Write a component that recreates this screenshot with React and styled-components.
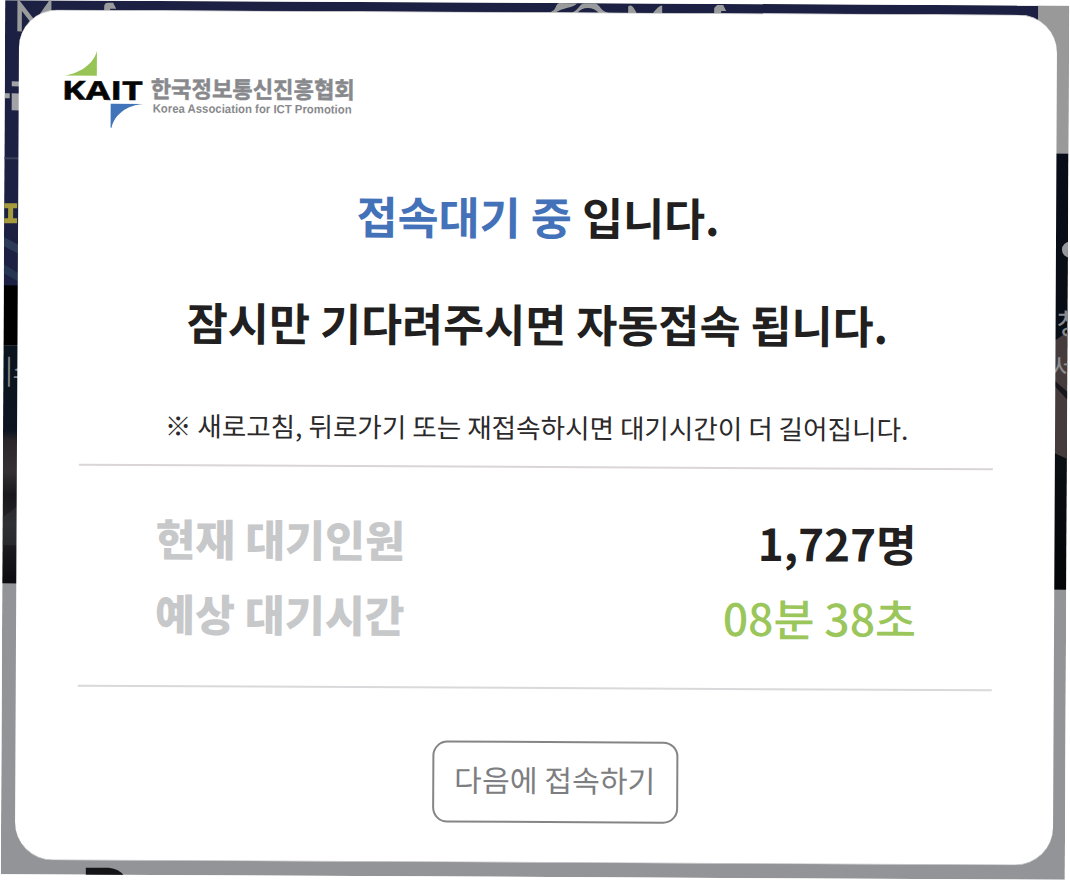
import React from "react";
import styled, { createGlobalStyle } from "styled-components";

const GlobalStyle = createGlobalStyle`
  * {
    box-sizing: border-box;
  }
  html, body {
    margin: 0;
    width: 1070px;
    height: 880px;
    overflow: hidden;
    background: #ffffff;
    font-family: "Noto Sans CJK KR", "Noto Sans", sans-serif;
  }
  p, h1, dl, dt, dd {
    margin: 0;
  }
`;

const Viewport = styled.div`
  width: 1070px;
  height: 880px;
  overflow: hidden;
`;

// the window sits very slightly tilted
const Stage = styled.div`
  display: grid;
  width: 1064px;
  height: 874px;
  overflow: hidden;
  transform-origin: 0 0;
  transform: matrix(1, 0.00505, -0.00505, 1, 5.2, 0.3);
`;

const Backdrop = styled.div`
  grid-area: 1 / 1;
  width: 1064px;
  height: 874px;
  svg {
    display: block;
  }
`;

const Card = styled.main`
  grid-area: 1 / 1;
  z-index: 1;
  display: flex;
  flex-direction: column;
  width: 1038px;
  height: 851px;
  margin: 9px 0 0 14px;
  padding: 40px 62px 0;
  border-top: 1px solid #c2c2c6;
  border-bottom: 1px solid #c2c2c6;
  border-radius: 38px;
  background: #ffffff;
`;

const Logo = styled.div`
  height: 80px;
  margin-left: -17px;
  svg {
    display: block;
  }
`;

const Title = styled.h1`
  margin-top: ${(props) => props.$top}px;
  padding-left: 2px;
  height: 60px;
  line-height: 60px;
  font-size: 44.6px;
  font-weight: 700;
  color: #211f20;
  text-align: center;
  white-space: nowrap;
`;

const Accent = styled.span`
  color: #4472b9;
`;

const Notice = styled.p`
  margin-top: 56px;
  padding-left: 1px;
  height: 36px;
  line-height: 35px;
  font-size: 26.6px;
  color: #2b292a;
  text-align: center;
  white-space: nowrap;
`;

const Status = styled.dl`
  display: flex;
  flex-direction: column;
  gap: 15px;
  height: 223px;
  margin-top: 21px;
  padding: 41px 76px 0 77px;
  border-top: 2px solid #dad6d7;
  border-bottom: 2px solid #d9d9db;
`;

const StatusRow = styled.div`
  display: flex;
  justify-content: space-between;
  height: 60px;
  line-height: 60px;
  white-space: nowrap;
`;

const Label = styled.dt`
  font-size: 43.4px;
  font-weight: 900;
  color: #c7c8ca;
`;

const Value = styled.dd`
  padding-top: 2px;
  font-size: ${(props) => (props.$light ? 44.5 : 44)}px;
  font-weight: ${(props) => (props.$light ? 500 : 700)};
  color: ${(props) => (props.$light ? "#9bc65b" : "#211f20")};
`;

const LaterButton = styled.button`
  align-self: center;
  width: 246px;
  height: 82px;
  margin: 52px 0 0 41px;
  padding: 0 0 6px;
  border: 2px solid #858587;
  border-radius: 15px;
  background: #ffffff;
  color: #7d7e81;
  font-family: inherit;
  font-size: 30.2px;
  line-height: 70px;
  white-space: nowrap;
`;

function PageBehind() {
  return (
    <Backdrop aria-hidden="true">
      <svg width="1064" height="874" viewBox="0 0 1064 874">
        <defs>
          <linearGradient id="photoLeft" x1="0" y1="0" x2="0" y2="1">
            <stop offset="0" stopColor="#09141e" />
            <stop offset="0.36" stopColor="#0d1620" />
            <stop offset="0.4" stopColor="#2a2629" />
            <stop offset="0.53" stopColor="#343034" />
            <stop offset="0.63" stopColor="#19171c" />
            <stop offset="0.75" stopColor="#242429" />
            <stop offset="1" stopColor="#0c0b0f" />
          </linearGradient>
          <linearGradient id="photoRight" x1="0" y1="0" x2="0" y2="1">
            <stop offset="0" stopColor="#070c18" />
            <stop offset="0.7" stopColor="#0a0f13" />
            <stop offset="1" stopColor="#030508" />
          </linearGradient>
        </defs>
        <rect width="1064" height="874" fill="#939497" />
        <rect width="1033" height="286" fill="#1c2143" />
        <rect y="157" width="20" height="2" fill="#3b4058" />
        <path d="M0 237 L20 247 V256 L0 246 Z" fill="#2c3c58" />
        <path d="M0 264 L20 276 V284 L0 273 Z" fill="#263551" />
        <rect y="285" width="20" height="60" fill="#000000" />
        <rect y="345" width="20" height="238" fill="url(#photoLeft)" />
        <path d="M0 517 L20 502 V545 H0 Z" fill="#4a4b50" opacity="0.3" />
        <rect x="1033" width="31" height="149" fill="#999999" />
        <rect x="1045" y="148" width="19" height="436" fill="url(#photoRight)" />
        <path d="M1050 336 L1064 326 V453 L1050 447 Z" fill="#453b3d" />
        <path d="M1050 374 L1064 386 V394 L1050 379 Z" fill="#16161b" />
        <circle cx="1066" cy="244" r="8" fill="#97989c" />
        <path d="M14.5 31 V4 L30 24 L44 4 V31" fill="none" stroke="#9a9b9d" strokeWidth="4.5" />
        <path d="M0 93 H5 V98 H0 Z M7 81 H15 V86 H7 Z M7 93 H15 V110 H7 Z" fill="#a2a3a6" />
        <path d="M0 203 H13 V208 H9 V218 H13 V223 H0 V218 H4 V208 H0 Z" fill="#a69b3c" />
        <path d="M99 10 V6 q0-4 4-4 h5 l3 6 h-6 v4 z" fill="#9a9b9d" />
        <path d="M543 10 C553 7 549 2 554 0 H572 C569 5 557 4 550 10 Z M566 10 C575 6 574 0 580 0 H590 C597 3 594 8 606 10 H594 C588 3 577 3 572 10 Z" fill="#9a9b9d" />
        <path d="M623 11 V3 q4-4 9 8 z M647 11 q6-9 10-9 V11 z M709 11 V4 l3-3 h6 l3 6 h-5 v4 z" fill="#9a9b9d" />
        <text x="2" y="379" fontSize="27" fill="#85878b">|스</text>
        <g fill="#8d8c8f" fontSize="29">
          <text x="1053" y="329">청</text>
          <text x="1047" y="372" fontSize="27">서</text>
        </g>
        <path d="M85 867 H108 Q119 868 124 876 H85 Z" fill="#151416" />
      </svg>
    </Backdrop>
  );
}

function KaitLogo() {
  return (
    <Logo>
      <svg width="300" height="80" viewBox="0 0 300 80">
        <path d="M0 25 C16 23 30 13 33 0 V25 Z" fill="#98c455" />
        <path d="M47 53 H80 C64 54 51 63 48 77 H47 Z" fill="#4274ba" />
        <text x="-2" y="49" fontFamily="Open Sans, sans-serif" fontSize="26" fontWeight="700" textLength="81" lengthAdjust="spacingAndGlyphs" fill="#050505" stroke="#050505" strokeWidth="0.5">KAIT</text>
        <text x="87" y="46.5" fontSize="23" fontWeight="700" textLength="204" lengthAdjust="spacingAndGlyphs" fill="#88898c" stroke="#88898c" strokeWidth="0.5">한국정보통신진흥협회</text>
        <text x="89" y="61.5" fontFamily="Liberation Sans, sans-serif" fontSize="12" fontWeight="700" textLength="199" lengthAdjust="spacingAndGlyphs" fill="#88898c">Korea Association for ICT Promotion</text>
      </svg>
    </Logo>
  );
}

function App() {
  return (
    <>
      <GlobalStyle />
      <Viewport>
        <Stage>
          <PageBehind />
          <Card>
            <KaitLogo />
            <Title $top={53}>
              <Accent>접속대기 중</Accent> 입니다.
            </Title>
            <Title $top={47}>잠시만 기다려주시면 자동접속 됩니다.</Title>
            <Notice>※ 새로고침, 뒤로가기 또는 재접속하시면 대기시간이 더 길어집니다.</Notice>
            <Status>
              <StatusRow>
                <Label>현재 대기인원</Label>
                <Value>1,727명</Value>
              </StatusRow>
              <StatusRow>
                <Label>예상 대기시간</Label>
                <Value $light>08분 38초</Value>
              </StatusRow>
            </Status>
            <LaterButton type="button">다음에 접속하기</LaterButton>
          </Card>
        </Stage>
      </Viewport>
    </>
  );
}

export default App;
